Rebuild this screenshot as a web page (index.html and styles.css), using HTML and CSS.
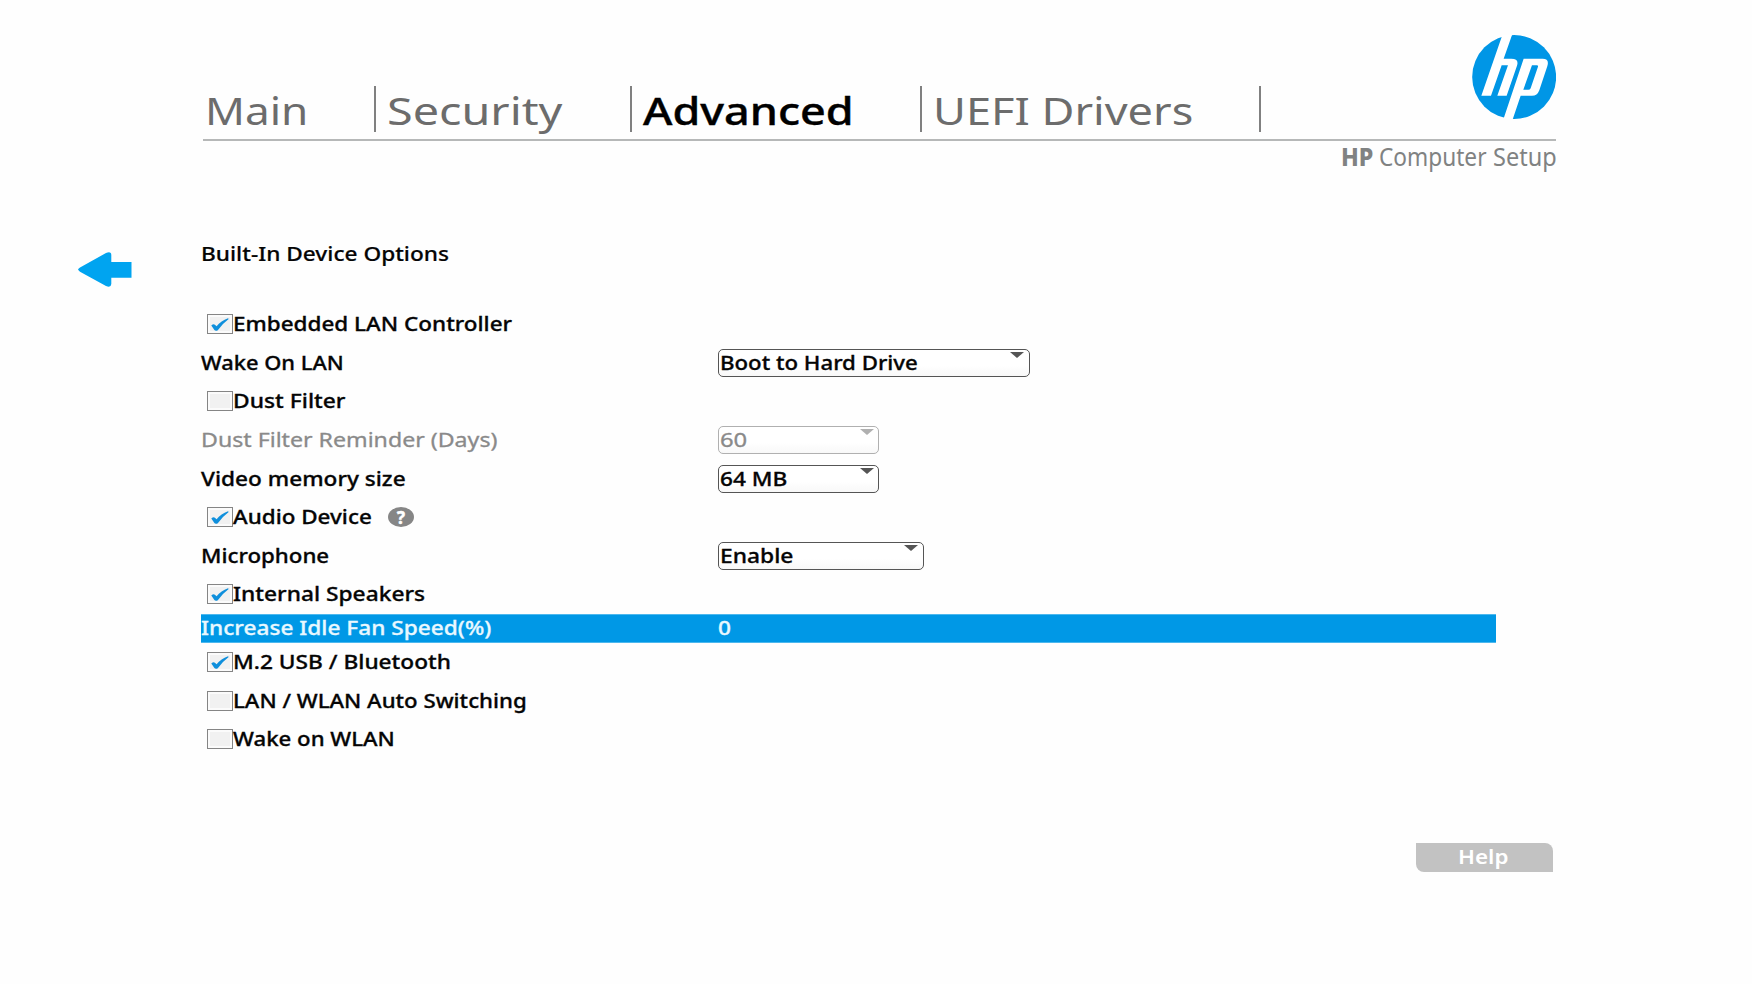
FILE: index.html
```
<!DOCTYPE html>
<html lang="en">
<head>
<meta charset="utf-8">
<title>HP Computer Setup</title>
<link rel="stylesheet" href="styles.css">
</head>
<body>
<svg class="defs" width="0" height="0" aria-hidden="true">
  <symbol id="tick" viewBox="0 0 18 13"><path d="M0.300 7.600 Q2.600 5.200 3.900 6.800 L5.600 8.300 Q10 2.600 17 0.200 L17.700 1 Q11.500 5.600 6.800 12.200 Q4.600 13.400 3.400 12 Z"/></symbol>
</svg>
<header class="header">
  <div class="header-top">
    <nav class="tabs">
      <a class="tab tab-main"><span class="t">Main</span></a>
      <a class="tab tab-security"><span class="t">Security</span></a>
      <a class="tab tab-advanced active"><span class="t">Advanced</span></a>
      <a class="tab tab-uefi"><span class="t">UEFI Drivers</span></a>
    </nav>
    <svg class="logo" viewBox="458 46 253 251">
      <circle cx="584.5" cy="171.500" r="126" fill="#0096e6"/>
      <path fill="#fff" d="M551 40H580L553 117H576Q600 117 593 138L562 228H534L566 136H547L515 228H486Z"/>
      <path fill="#fff" fill-rule="evenodd" d="M613 117H670Q691 117 684 139L660 211Q654 228 638 228H604L579 302H551ZM638 136L612 210H627Q632 210 634 205L656 141Q657 136 653 136Z"/>
    </svg>
  </div>
  <div class="brand"><b class="t">HP</b><span class="t computer">Computer</span><span class="t setup">Setup</span></div>
</header>
<main class="page">
  <div class="heading">
    <svg class="back" viewBox="0 0 54 35"><path d="M0 17.600 Q0.500 16.600 2 15.500 L28 1 Q33.300 -1 33.300 3 V10 H53.500 V25.700 H33.300 V32 Q33 36 28 34 L2 19.700 Q0.500 18.700 0 17.600Z"/></svg>
    <h1><span class="t">Built-In Device Options</span></h1>
  </div>
  <div class="options">
    <div class="row r-lan"><i class="box"><svg class="tick"><use href="#tick"/></svg></i><span class="t">Embedded LAN Controller</span></div>
    <div class="row r-wol"><span class="label"><span class="t">Wake On LAN</span></span><div class="select"><span class="t">Boot to Hard Drive</span></div></div>
    <div class="row r-dust"><i class="box"></i><span class="t">Dust Filter</span></div>
    <div class="row r-days disabled"><span class="label"><span class="t">Dust Filter Reminder (Days)</span></span><div class="select"><span class="t">60</span></div></div>
    <div class="row r-video"><span class="label"><span class="t">Video memory size</span></span><div class="select"><span class="t">64 MB</span></div></div>
    <div class="row r-audio"><i class="box"><svg class="tick"><use href="#tick"/></svg></i><span class="t">Audio Device</span><span class="info">?</span></div>
    <div class="row r-mic"><span class="label"><span class="t">Microphone</span></span><div class="select"><span class="t">Enable</span></div></div>
    <div class="row r-speakers"><i class="box"><svg class="tick"><use href="#tick"/></svg></i><span class="t">Internal Speakers</span></div>
    <div class="row r-fan selected"><span class="label"><span class="t">Increase Idle Fan Speed(%)</span></span><span class="t value">0</span></div>
    <div class="row r-usb"><i class="box"><svg class="tick"><use href="#tick"/></svg></i><span class="t">M.2 USB / Bluetooth</span></div>
    <div class="row r-switch"><i class="box"></i><span class="t">LAN / WLAN Auto Switching</span></div>
    <div class="row r-wlan"><i class="box"></i><span class="t">Wake on WLAN</span></div>
  </div>
  <div class="footer"><div class="help"><span class="t">Help</span></div></div>
</main>
</body>
</html>
```
FILE: styles.css
```
* { box-sizing: border-box; }
body {
  margin: 0;
  width: 1752px;
  height: 984px;
  overflow: hidden;
  background: #fefefe;
  color: #050505;
  font: 500 20px/1 "Noto Sans", "Open Sans", sans-serif;
}
.defs { position: absolute; }

.t {
  --sx: 1.12;
  display: inline-block;
  white-space: nowrap;
  transform: scaleX(var(--sx));
  transform-origin: left center;
}

.header { width: 1353px; margin-left: 203px; padding-top: 35px; }
.header-top {
  display: flex;
  justify-content: space-between;
  height: 106px;
  border-bottom: 2px solid #b6b8b8;
}
.tabs { display: flex; margin-top: 51px; height: 46px; }
.tab {
  display: flex;
  align-items: center;
  padding: 2px 0 0 12px;
  border-right: 2px solid #808080;
  font-size: 38px;
  font-weight: 400;
  color: #6c6c6c;
}
.tab.active { color: #000; font-weight: 500; -webkit-text-stroke: 0.4px; }
.tab-main { width: 173px; padding-left: 2px; }
.tab-main .t { --sx: 1.16; }
.tab-security { width: 256px; padding-left: 11px; }
.tab-security .t { --sx: 1.23; }
.tab-advanced { width: 290px; padding-left: 11px; }
.tab-advanced .t { --sx: 1.183; }
.tab-uefi { width: 339px; padding-left: 11px; }
.tab-uefi .t { --sx: 1.187; }
.logo { width: 84.3px; height: 84px; margin-top: 0.3px; }

.brand {
  display: grid;
  grid-template-columns: 37.5px 113.5px 63px;
  justify-content: end;
  align-items: center;
  height: 33px;
  font-size: 24.5px;
  font-weight: 400;
  color: #808282;
}
.brand b { --sx: 0.95; margin-left: -1px; font-weight: 800; }
.brand .computer { --sx: 0.925; margin-left: -0.5px; }
.brand .setup { --sx: 0.96; }

.page { margin-left: 78px; width: 1475px; padding-top: 65px; }
.heading { display: flex; height: 65.700px; }
.back { width: 54px; height: 35px; margin: 13px 69px 0 0; fill: #00a4f0; }
h1 { margin: 4.800px 0 0 -0.5px; font: inherit; -webkit-text-stroke: 0.2px; }
h1 .t { --sx: 1.132; }

.options { margin-left: 122.500px; width: 1295.5px; -webkit-text-stroke: 0.3px; }
.row { display: flex; align-items: center; height: 38.650px; }
.label { width: 517px; }
.box {
  display: flex;
  justify-content: center;
  align-items: center;
  width: 26px;
  height: 20px;
  margin: 0 0 0 6.500px;
  border: 1px solid #858585;
  background: #f1f1f1;
  box-shadow: inset 0 0 0 2px #fbfbfb;
}
.tick { width: 18px; height: 13px; fill: #0f8fdc; }
.select {
  display: flex;
  align-items: center;
  justify-content: space-between;
  height: 28px;
  padding-left: 1px;
  border: 1.5px solid #555;
  border-radius: 5px;
  background: linear-gradient(#fff 60%, #f8f8f8);
}
.select::after {
  content: "";
  align-self: flex-start;
  margin: 2px 4.500px 0 0;
  border: solid transparent;
  border-width: 6.500px 7.500px 0;
  border-top-color: #555;
}
.r-lan .t { --sx: 1.123; }
.r-wol .label .t { --sx: 1.094; }
.r-wol .select { width: 312px; }
.r-wol .select .t { --sx: 1.111; }
.r-dust .t { --sx: 1.14; }
.r-days .label .t { --sx: 1.157; }
.r-days .select, .r-video .select { width: 161.500px; }
.r-days .select .t { --sx: 1.19; }
.r-video .t { --sx: 1.131; }
.r-audio .t { --sx: 1.121; }
.r-mic .t { --sx: 1.114; }
.r-mic .select { width: 206px; }
.r-mic .select .t { --sx: 1.14; }
.r-speakers .t { --sx: 1.137; }
.r-fan .t { --sx: 1.132; }
.r-usb .t { --sx: 1.134; }
.r-switch .t { --sx: 1.111; }
.r-wlan .t { --sx: 1.11; }

.disabled { color: #8a8a8a; font-weight: 400; }
.disabled .select { border-color: #b0b0b0; }
.disabled .select::after { border-top-color: #b0b0b0; }
.selected {
  height: 29px;
  background: #0098e6;
  border: solid #4db8ee;
  border-width: 1px 0;
  color: #e9f8ff;
}
.info {
  display: grid;
  place-items: center;
  width: 26px;
  height: 20px;
  margin-left: 31px;
  border-radius: 50%;
  background: #868686;
  color: #fff;
  font-size: 17px;
  font-weight: 800;
}

.footer { display: flex; justify-content: flex-end; margin-top: 84px; }
.help {
  display: flex;
  align-items: center;
  width: 137px;
  height: 29px;
  padding-left: 42px;
  border-radius: 0 8px;
  background: #c2c2c2;
  color: #fff;
  font-weight: 600;
}
.help .t { --sx: 1.12; }
```
